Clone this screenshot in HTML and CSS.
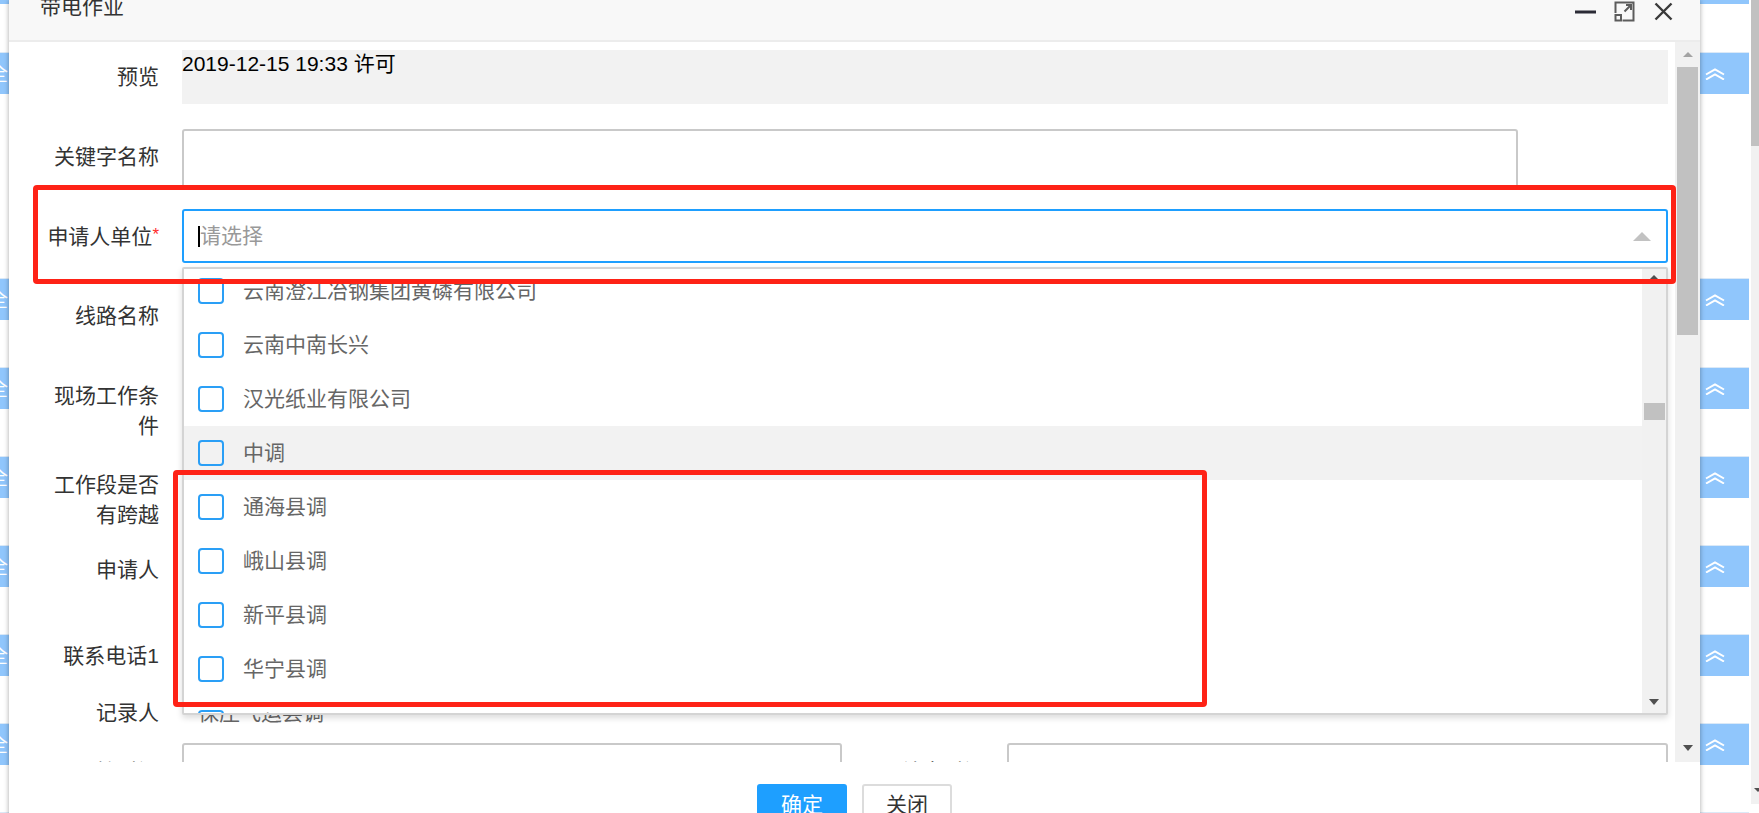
FILE: index.html
```html
<!DOCTYPE html>
<html lang="zh-CN">
<head>
<meta charset="utf-8">
<title>带电作业</title>
<link rel="stylesheet" href="styles.css">
</head>
<body>
<div class="screen">
  <div class="page">
    <div class="blk blk-top"></div>
    <div class="blk b1"><span class="frag">全</span><svg class="chev" width="20" height="12" viewBox="0 0 20 12"><path d="M1 6.5L10 1.5L19 6.5M1 11.5L10 6.5L19 11.5" fill="none" stroke="#fff" stroke-width="2"/></svg></div>
    <div class="blk b2"><span class="frag">全</span><svg class="chev" width="20" height="12" viewBox="0 0 20 12"><path d="M1 6.5L10 1.5L19 6.5M1 11.5L10 6.5L19 11.5" fill="none" stroke="#fff" stroke-width="2"/></svg></div>
    <div class="blk bn"><span class="frag">全</span><svg class="chev" width="20" height="12" viewBox="0 0 20 12"><path d="M1 6.5L10 1.5L19 6.5M1 11.5L10 6.5L19 11.5" fill="none" stroke="#fff" stroke-width="2"/></svg></div>
    <div class="blk bn"><span class="frag">全</span><svg class="chev" width="20" height="12" viewBox="0 0 20 12"><path d="M1 6.5L10 1.5L19 6.5M1 11.5L10 6.5L19 11.5" fill="none" stroke="#fff" stroke-width="2"/></svg></div>
    <div class="blk bn"><span class="frag">全</span><svg class="chev" width="20" height="12" viewBox="0 0 20 12"><path d="M1 6.5L10 1.5L19 6.5M1 11.5L10 6.5L19 11.5" fill="none" stroke="#fff" stroke-width="2"/></svg></div>
    <div class="blk bn"><span class="frag">全</span><svg class="chev" width="20" height="12" viewBox="0 0 20 12"><path d="M1 6.5L10 1.5L19 6.5M1 11.5L10 6.5L19 11.5" fill="none" stroke="#fff" stroke-width="2"/></svg></div>
    <div class="blk bn"><span class="frag">全</span><svg class="chev" width="20" height="12" viewBox="0 0 20 12"><path d="M1 6.5L10 1.5L19 6.5M1 11.5L10 6.5L19 11.5" fill="none" stroke="#fff" stroke-width="2"/></svg></div>
    <div class="blk bn"><span class="frag">全</span><svg class="chev" width="20" height="12" viewBox="0 0 20 12"><path d="M1 6.5L10 1.5L19 6.5M1 11.5L10 6.5L19 11.5" fill="none" stroke="#fff" stroke-width="2"/></svg></div>
  </div>
  <div class="page-sb">
    <div class="page-sb-thumb"></div>
    <div class="spacer"></div>
    <div class="page-sb-arrow"></div>
  </div>

  <div class="dialog">
    <div class="dlg-head">
      <div class="dlg-title">带电作业</div>
      <div class="dlg-tools">
        <svg width="21" height="21" viewBox="0 0 21 21"><rect x="0" y="9.5" width="21" height="3" fill="#2b2b36"/></svg>
        <svg width="21" height="21" viewBox="0 0 21 21"><path d="M1.5 12V1.5H19.5V19.5H8.5" fill="none" stroke="#5c5c5c" stroke-width="2"/><rect x="1.5" y="14" width="5.5" height="5.5" fill="none" stroke="#5c5c5c" stroke-width="2"/><path d="M10.5 10.5L17 4M12 4H17V9" fill="none" stroke="#5c5c5c" stroke-width="2"/></svg>
        <svg width="21" height="21" viewBox="0 0 21 21"><path d="M2.5 2.5L18.5 18.5M18.5 2.5L2.5 18.5" fill="none" stroke="#3a3a3a" stroke-width="2.4"/></svg>
      </div>
    </div>

    <div class="dlg-body">
      <div class="form">
        <div class="row r-prev">
          <div class="lbl">预览</div>
          <div class="fld"><div class="preview">2019-12-15 19:33 许可</div></div>
        </div>
        <div class="row r-key">
          <div class="lbl">关键字名称</div>
          <div class="fld"><div class="input key-input"></div></div>
        </div>
        <div class="row r-sel">
          <div class="lbl">申请人单位<span class="req">*</span></div>
          <div class="fld sel-wrap">
            <div class="select">
              <span class="caret"></span><span class="placeholder">请选择</span>
              <span class="tri"></span>
            </div>
            <div class="panel">
              <div class="opts">
                <div class="opt-list">
                  <div class="opt"><span class="cb"></span><span class="opt-text">云南澄江冶钢集团黄磷有限公司</span></div>
                  <div class="opt"><span class="cb"></span><span class="opt-text">云南中南长兴</span></div>
                  <div class="opt"><span class="cb"></span><span class="opt-text">汉光纸业有限公司</span></div>
                  <div class="opt hover"><span class="cb"></span><span class="opt-text">中调</span></div>
                  <div class="opt"><span class="cb"></span><span class="opt-text">通海县调</span></div>
                  <div class="opt"><span class="cb"></span><span class="opt-text">峨山县调</span></div>
                  <div class="opt"><span class="cb"></span><span class="opt-text">新平县调</span></div>
                  <div class="opt"><span class="cb"></span><span class="opt-text">华宁县调</span></div>
                  <div class="opt"><span class="cb"></span><span class="opt-text">易门县调</span></div>
                </div>
              </div>
              <div class="psb">
                <div class="psb-up"><span class="ar-up dark"></span></div>
                <div class="psb-thumb"></div>
                <div class="spacer"></div>
                <div class="psb-dn"><span class="ar-dn"></span></div>
              </div>
            </div>
          </div>
        </div>
        <div class="row r-line">
          <div class="lbl">线路名称</div>
          <div class="fld"></div>
        </div>
        <div class="row r-cond">
          <div class="lbl">现场工作条件</div>
          <div class="fld"></div>
        </div>
        <div class="row r-cross">
          <div class="lbl">工作段是否有跨越</div>
          <div class="fld"></div>
        </div>
        <div class="row r-app">
          <div class="lbl">申请人</div>
          <div class="fld"></div>
        </div>
        <div class="row r-tel">
          <div class="lbl">联系电话1</div>
          <div class="fld"></div>
        </div>
        <div class="row r-rec">
          <div class="lbl">记录人</div>
          <div class="fld"><div class="rec-val">保庄飞运县调</div></div>
        </div>
        <div class="row r-time">
          <div class="lbl">开始时间</div>
          <div class="input half-input"></div>
          <div class="lbl2">结束时间</div>
          <div class="input rest-input"></div>
        </div>
      </div>
      <div class="vsb">
        <div class="vsb-up"><span class="ar-up"></span></div>
        <div class="vsb-thumb"></div>
        <div class="spacer"></div>
        <div class="vsb-dn"><span class="ar-dn"></span></div>
      </div>
    </div>

    <div class="dlg-foot">
      <button class="btn btn-primary">确定</button>
      <button class="btn btn-default">关闭</button>
    </div>
  </div>

  <div class="anno anno-1"></div>
  <div class="anno anno-2"></div>
</div>
</body>
</html>
```

FILE: styles.css
```css
* { box-sizing: border-box; }
html, body {
  margin: 0;
  padding: 0;
  background: #fff;
}
body {
  font-family: "Liberation Sans", "Noto Sans CJK SC", sans-serif;
  font-size: 21px;
  color: #333;
}
.screen {
  position: relative;
  width: 1759px;
  height: 813px;
  overflow: hidden;
  display: flex;
  background: #fff;
}

/* background page */
.page {
  width: 1751px;
  display: flex;
  flex-direction: column;
}
.blk {
  width: 1749px;
  height: 42px;
  flex-shrink: 0;
  background: #90c6fc;
  border-top: 1px solid #dbe9f7;
  display: flex;
  align-items: center;
  justify-content: space-between;
  overflow: hidden;
}
.blk-top { height: 4px; border-top: 0; }
.b1 { margin-top: 48px; }
.b2 { margin-top: 184px; }
.bn { margin-top: 47px; }
.frag {
  color: #fff;
  font-size: 20px;
  margin-left: -12px;
  line-height: 20px;
}
.chev { margin-right: 24px; }

.page-sb {
  width: 8px;
  height: 804px;
  background: #f1f1f1;
  display: flex;
  flex-direction: column;
  align-items: center;
}
.page-sb-thumb {
  width: 8px;
  height: 146px;
  background: #c1c1c1;
}
.page-sb-arrow {
  width: 0;
  height: 0;
  border-left: 4px solid transparent;
  border-right: 4px solid transparent;
  border-top: 4px solid #505050;
  margin-bottom: 12px;
  margin-left: 6px;
}
.spacer { flex: 1; }

/* dialog */
.dialog {
  position: absolute;
  left: 9px;
  top: 0;
  width: 1691px;
  height: 840px;
  background: #fff;
  box-shadow: 0 0 5px rgba(0, 0, 0, 0.35);
  z-index: 2;
}
.dlg-head {
  height: 42px;
  background: #f8f8f8;
  border-bottom: 2px solid #ececec;
  display: flex;
  align-items: flex-start;
  padding: 0 26px 0 31px;
}
.dlg-title {
  font-size: 21px;
  line-height: 14px;
  color: #333;
}
.dlg-tools {
  margin-left: auto;
  display: flex;
  gap: 18px;
  padding-top: 1px;
}
.dlg-tools svg { display: block; }

.dlg-body {
  height: 720px;
  display: flex;
  overflow: hidden;
}
.form {
  flex: 1;
  padding: 8px 7px 0 0;
  display: flex;
  flex-direction: column;
}
.row {
  display: flex;
  align-items: center;
  flex-shrink: 0;
}
.lbl {
  width: 150px;
  flex-shrink: 0;
  padding-left: 31px;
  margin-right: 23px;
  text-align: right;
  line-height: 30px;
  color: #333;
}
.lbl2 {
  width: 143px;
  flex-shrink: 0;
  text-align: right;
  margin-right: 22px;
  color: #333;
  line-height: 30px;
}
.fld {
  flex: 1;
  align-self: stretch;
  display: flex;
  flex-direction: column;
}
.req {
  color: #ff2a2a;
  font-size: 17px;
  vertical-align: 4px;
}

.r-prev { height: 54px; margin-bottom: 25px; }
.r-key { height: 60px; margin-bottom: 20px; }
.r-key .lbl { padding-bottom: 4px; }
.r-sel { height: 54px; margin-bottom: 26px; }
.r-line { height: 54px; margin-bottom: 26px; }
.r-cond { height: 84px; margin-bottom: 26px; }
.r-cross { height: 42px; margin-bottom: 26px; }
.r-app { height: 46px; margin-bottom: 26px; }
.r-tel { height: 74px; }
.r-rec { height: 40px; margin-bottom: 10px; }
.r-time { height: 54px; }
.r-time .lbl, .r-time .lbl2 { padding-top: 3px; }

.preview {
  height: 54px;
  background: #f2f2f2;
  color: #000;
  line-height: 24px;
  padding-top: 2px;
}
.input {
  border: 2px solid #c9c9c9;
  border-radius: 3px;
  background: #fff;
}
.key-input {
  width: 1336px;
  height: 60px;
}
.half-input {
  width: 660px;
  height: 54px;
  flex-shrink: 0;
}
.rest-input {
  flex: 1;
  height: 54px;
}

/* select */
.sel-wrap { position: relative; }
.select {
  height: 54px;
  border: 2px solid #1e9fff;
  border-radius: 3px;
  display: flex;
  align-items: center;
  padding-left: 14px;
  padding-right: 15px;
  background: #fff;
}
.caret {
  width: 2px;
  height: 21px;
  background: #000;
}
.placeholder {
  color: #999;
  line-height: 24px;
}
.tri {
  margin-left: auto;
  width: 0;
  height: 0;
  border-left: 9px solid transparent;
  border-right: 9px solid transparent;
  border-bottom: 9px solid #c2c2c2;
}

.panel {
  position: absolute;
  top: 58px;
  left: 0;
  width: 1486px;
  height: 448px;
  border: 2px solid #d4d4d4;
  border-radius: 2px;
  background: #fff;
  box-shadow: 0 3px 6px rgba(0, 0, 0, 0.14);
  display: flex;
  overflow: hidden;
  z-index: 5;
}
.opts {
  flex: 1;
  overflow: hidden;
}
.opt-list {
  margin-top: -5px;
}
.opt {
  height: 54px;
  display: flex;
  align-items: center;
  padding-left: 14px;
}
.opt.hover { background: #f2f2f2; }
.cb {
  width: 26px;
  height: 26px;
  flex-shrink: 0;
  border: 2px solid #2a9ff6;
  border-radius: 4px;
  margin-right: 19px;
  background: transparent;
}
.opt-text {
  color: #666;
  line-height: 24px;
  white-space: nowrap;
}
.psb {
  width: 24px;
  flex-shrink: 0;
  background: #f1f1f1;
  display: flex;
  flex-direction: column;
  align-items: center;
}
.psb-up {
  height: 17px;
  display: flex;
  align-items: center;
  justify-content: center;
}
.psb-thumb {
  margin-top: 117px;
  width: 21px;
  height: 17px;
  background: #c1c1c1;
}
.psb-dn {
  height: 23px;
  display: flex;
  align-items: center;
  justify-content: center;
}

.ar-up {
  width: 0;
  height: 0;
  border-left: 5px solid transparent;
  border-right: 5px solid transparent;
  border-bottom: 5px solid #a3a3a3;
}
.ar-up.dark { border-bottom-color: #505050; }
.ar-dn {
  width: 0;
  height: 0;
  border-left: 5.5px solid transparent;
  border-right: 5.5px solid transparent;
  border-top: 6px solid #505050;
}

.vsb {
  width: 25px;
  flex-shrink: 0;
  background: #f1f1f1;
  display: flex;
  flex-direction: column;
  align-items: center;
}
.vsb-up {
  height: 25px;
  display: flex;
  align-items: center;
  justify-content: center;
}
.vsb-thumb {
  width: 21px;
  height: 268px;
  background: #c1c1c1;
}
.vsb-dn {
  height: 28px;
  display: flex;
  align-items: center;
  justify-content: center;
}

.rec-val {
  padding-left: 16px;
  color: #666;
  line-height: 40px;
  white-space: nowrap;
}

/* footer */
.dlg-foot {
  display: flex;
  justify-content: center;
  gap: 15px;
  padding-top: 22px;
}
.btn {
  width: 90px;
  height: 42px;
  border-radius: 3px;
  font-family: "Liberation Sans", "Noto Sans CJK SC", sans-serif;
  font-size: 21px;
  line-height: 24px;
  padding: 0;
}
.btn-primary {
  background: #1e9fff;
  border: 2px solid #1e9fff;
  color: #fff;
}
.btn-default {
  background: #fff;
  border: 2px solid #dcdcdc;
  color: #333;
}

/* red annotation boxes */
.anno {
  position: absolute;
  border: 5px solid #fe2216;
  border-radius: 4px;
  z-index: 10;
  pointer-events: none;
}
.anno-1 {
  left: 33px;
  top: 185px;
  width: 1643px;
  height: 99px;
}
.anno-2 {
  left: 173px;
  top: 470px;
  width: 1034px;
  height: 237px;
}
```
